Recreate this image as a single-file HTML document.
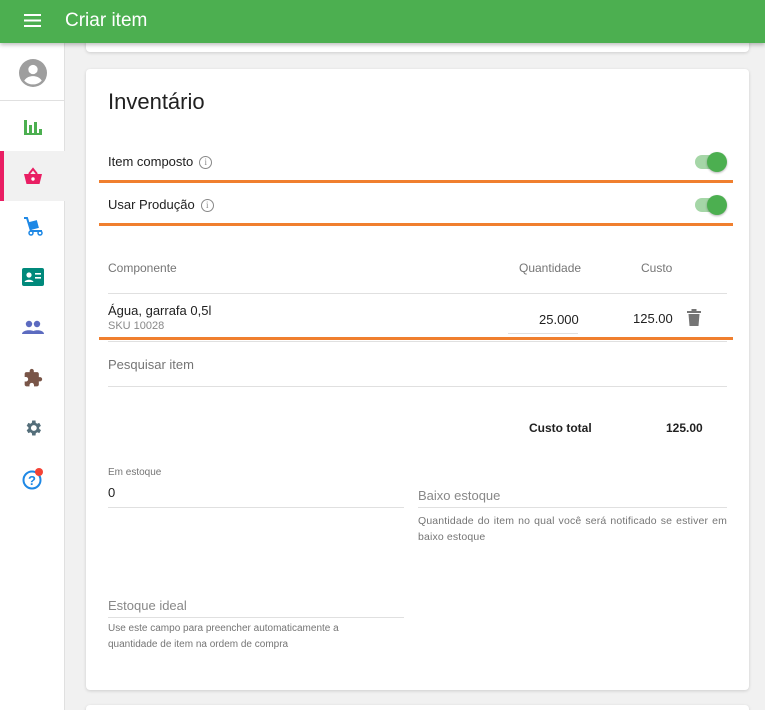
<!DOCTYPE html>
<html><head><meta charset="utf-8"><style>
*{box-sizing:border-box;margin:0;padding:0}
html,body{width:765px;height:710px;overflow:hidden}
body{background:#f1f1f1;font-family:"Liberation Sans",sans-serif;position:relative;color:#212121}
.top{position:absolute;left:0;top:0;width:765px;height:43px;background:#4caf50;box-shadow:0 2px 4px rgba(0,0,0,.25);z-index:5}
.top .t{position:absolute;left:65px;top:10px;color:#fff;font-size:19px}
.side{position:absolute;left:0;top:43px;width:65px;height:667px;background:#fff;border-right:1px solid #e0e0e0}
.ic{position:absolute;left:0;width:65px;height:50px;display:flex;align-items:center;justify-content:center}
.card{position:absolute;left:86px;width:663px;background:#fff;border-radius:4px;box-shadow:0 1px 3px rgba(0,0,0,.15)}
.a{position:absolute}
.or{position:absolute;left:99px;width:634px;height:3px;background:#f07f2e}
.hl{position:absolute;height:1px;background:#e0e0e0}
.lbl{font-size:13px;color:#212121}
.g{color:#757575}
.tg{position:absolute;left:695px;width:30px;height:14px;border-radius:7px;background:#a5d6a7}
.tg::after{content:"";position:absolute;right:-2px;top:-3px;width:20px;height:20px;border-radius:50%;background:#4caf50;box-shadow:0 1px 2px rgba(0,0,0,.3)}
.info{display:inline-block;width:13px;height:13px;border:1px solid #888;border-radius:50%;font-size:9px;text-align:center;line-height:11px;color:#888;vertical-align:1px;margin-left:6px;font-family:"Liberation Serif",serif}
</style></head><body>
<div class="top">
<svg class="a" style="left:24px;top:14px" width="17" height="13"><rect y="0" width="17" height="2" fill="#fff"/><rect y="5.5" width="17" height="2" fill="#fff"/><rect y="11" width="17" height="2" fill="#fff"/></svg>
<div class="t">Criar item</div></div>
<div class="side">
<div class="ic" style="top:5px"><svg width="28" height="28" viewBox="0 0 24 24"><circle cx="12" cy="12" r="12" fill="#9e9e9e"/><circle cx="12" cy="9" r="4" fill="#fff"/><path d="M4.5 18.5c2-3 5-3.8 7.5-3.8s5.5.8 7.5 3.8c-2 2.2-4.6 3.3-7.5 3.3s-5.5-1.1-7.5-3.3z" fill="#fff"/></svg></div>
<div style="position:absolute;left:0;top:57px;width:65px;height:1px;background:#e0e0e0"></div>
<div class="ic" style="top:59px"><svg width="20" height="18"><rect x="1" y="2" width="3" height="15" fill="#4caf50"/><rect x="6" y="7" width="3" height="10" fill="#4caf50"/><rect x="11" y="4" width="3" height="13" fill="#4caf50"/><rect x="16" y="11" width="3" height="6" fill="#4caf50"/><rect x="1" y="15" width="18" height="2" fill="#4caf50"/></svg></div>
<div style="position:absolute;left:0;top:108px;width:65px;height:50px;background:#f1f1f1"></div>
<div style="position:absolute;left:0;top:108px;width:4px;height:50px;background:#e91e63"></div>
<div class="ic" style="top:108px"><svg width="20" height="18" viewBox="0 0 20 18"><path d="M6 7L10 2L14 7" stroke="#e91e63" stroke-width="2" fill="none"/><path d="M1 7h18l-2.5 10h-13z" fill="#e91e63"/><circle cx="10" cy="12" r="1.7" fill="#fff"/></svg></div>
<div class="ic" style="top:158px"><svg width="22" height="20" viewBox="0 0 22 20"><path d="M2 2h3l4 13h11" stroke="#1e88e5" stroke-width="2" fill="none"/><rect x="8" y="5" width="8" height="8" fill="#1e88e5" transform="rotate(-15 12 9)"/><circle cx="9" cy="17" r="2" fill="none" stroke="#1e88e5" stroke-width="1.5"/><circle cx="18" cy="17" r="2" fill="none" stroke="#1e88e5" stroke-width="1.5"/></svg></div>
<div class="ic" style="top:209px"><svg width="22" height="18"><rect width="22" height="18" rx="2" fill="#00897b"/><circle cx="7" cy="7" r="2.6" fill="#fff"/><path d="M2.5 14c1-3 8-3 9 0z" fill="#fff"/><rect x="13" y="5" width="6" height="1.6" fill="#fff"/><rect x="13" y="9" width="6" height="1.6" fill="#fff"/></svg></div>
<div class="ic" style="top:259px"><svg width="22" height="14"><circle cx="7" cy="4" r="3.2" fill="#5c6bc0"/><circle cx="15" cy="4" r="3.2" fill="#5c6bc0"/><path d="M0 14c0-5 14-5 14 0z" fill="#5c6bc0"/><path d="M9 14c0-5 13-5 13 0z" fill="#5c6bc0"/></svg></div>
<div class="ic" style="top:310px"><svg width="20" height="20" viewBox="0 0 24 24"><path d="M20.5 11H19V7c0-1.1-.9-2-2-2h-4V3.5a2.5 2.5 0 00-5 0V5H4c-1.1 0-2 .9-2 2v3.8h1.5c1.5 0 2.7 1.2 2.7 2.7S5 16.2 3.5 16.2H2V20c0 1.1.9 2 2 2h3.8v-1.5c0-1.5 1.2-2.7 2.7-2.7s2.7 1.2 2.7 2.7V22H17c1.1 0 2-.9 2-2v-4h1.5a2.5 2.5 0 000-5z" fill="#795548"/></svg></div>
<div class="ic" style="top:360px"><svg width="20" height="20" viewBox="0 0 24 24"><path d="M19.4 13a7.5 7.5 0 000-2l2.1-1.6-2-3.5-2.5 1a7.3 7.3 0 00-1.7-1L15 3h-4l-.4 2.9a7.3 7.3 0 00-1.7 1l-2.5-1-2 3.5L6.5 11a7.5 7.5 0 000 2l-2.1 1.6 2 3.5 2.5-1c.5.4 1.1.7 1.700 1L11 21h4l.4-2.9c.6-.3 1.2-.6 1.7-1l2.5 1 2-3.5zM13 15.5a3.5 3.5 0 110-7 3.5 3.5 0 010 7z" fill="#546e7a"/></svg></div>
<div class="ic" style="top:411px"><svg width="24" height="24"><circle cx="11" cy="13" r="8.5" fill="none" stroke="#1e88e5" stroke-width="2"/><text x="11" y="18" text-anchor="middle" font-size="13" font-weight="bold" fill="#1e88e5" font-family="Liberation Sans">?</text><circle cx="18" cy="5" r="4" fill="#f44336"/></svg></div>
</div>
<div class="card" style="top:30px;height:22px"></div>
<div class="card" style="top:69px;height:621px"></div>
<div class="card" style="top:705px;height:20px"></div>
<div class="a" style="left:108px;top:89px;font-size:22px;color:#212121">Inventário</div>
<div class="a lbl" style="left:108px;top:154px">Item composto<span class="info">i</span></div>
<div class="tg" style="top:155px"></div>
<div class="or" style="top:180px"></div>
<div class="a lbl" style="left:108px;top:197px">Usar Produção<span class="info">i</span></div>
<div class="tg" style="top:198px"></div>
<div class="or" style="top:223px"></div>
<div class="a g" style="left:108px;top:261px;font-size:12px">Componente</div>
<div class="a g" style="left:519px;top:261px;font-size:12px">Quantidade</div>
<div class="a g" style="left:641px;top:261px;font-size:12px">Custo</div>
<div class="hl" style="left:108px;top:293px;width:619px"></div>
<div class="a lbl" style="left:108px;top:303px">Água, garrafa 0,5l</div>
<div class="a" style="left:108px;top:320px;font-size:11px;color:#888">SKU 10028</div>
<div class="a lbl" style="left:539px;top:312px">25.000</div>
<div class="hl" style="left:508px;top:333px;width:70px"></div>
<div class="a lbl" style="left:633px;top:311px">125.00</div>
<svg class="a" style="left:687px;top:309px" width="14" height="17"><rect x="0" y="2" width="14" height="2" fill="#757575"/><rect x="4.5" y="0" width="5" height="2" fill="#757575"/><path d="M1.5 5h11l-1 12h-9z" fill="#757575"/></svg>
<div class="or" style="top:337px"></div>
<div class="hl" style="left:108px;top:341px;width:619px"></div>
<div class="a g" style="left:108px;top:357px;font-size:13px">Pesquisar item</div>
<div class="hl" style="left:108px;top:386px;width:619px"></div>
<div class="a" style="left:529px;top:421px;font-size:12px;font-weight:bold">Custo total</div>
<div class="a" style="left:666px;top:421px;font-size:12px;font-weight:bold">125.00</div>
<div class="a g" style="left:108px;top:467px;font-size:10px">Em estoque</div>
<div class="a lbl" style="left:108px;top:485px">0</div>
<div class="hl" style="left:108px;top:507px;width:296px"></div>
<div class="a g" style="left:418px;top:488px;font-size:13px;color:#888">Baixo estoque</div>
<div class="hl" style="left:418px;top:507px;width:309px"></div>
<div class="a" style="left:418px;top:513px;width:309px;font-size:10.5px;letter-spacing:.15px;line-height:16px;color:#757575;text-align:justify;text-align-last:left">Quantidade do item no qual você será notificado se estiver em baixo estoque</div>
<div class="a g" style="left:108px;top:598px;font-size:13px;color:#888">Estoque ideal</div>
<div class="hl" style="left:108px;top:617px;width:296px"></div>
<div class="a" style="left:108px;top:621px;width:260px;font-size:10px;line-height:16px;color:#757575">Use este campo para preencher automaticamente a quantidade de item na ordem de compra</div>
</body></html>
